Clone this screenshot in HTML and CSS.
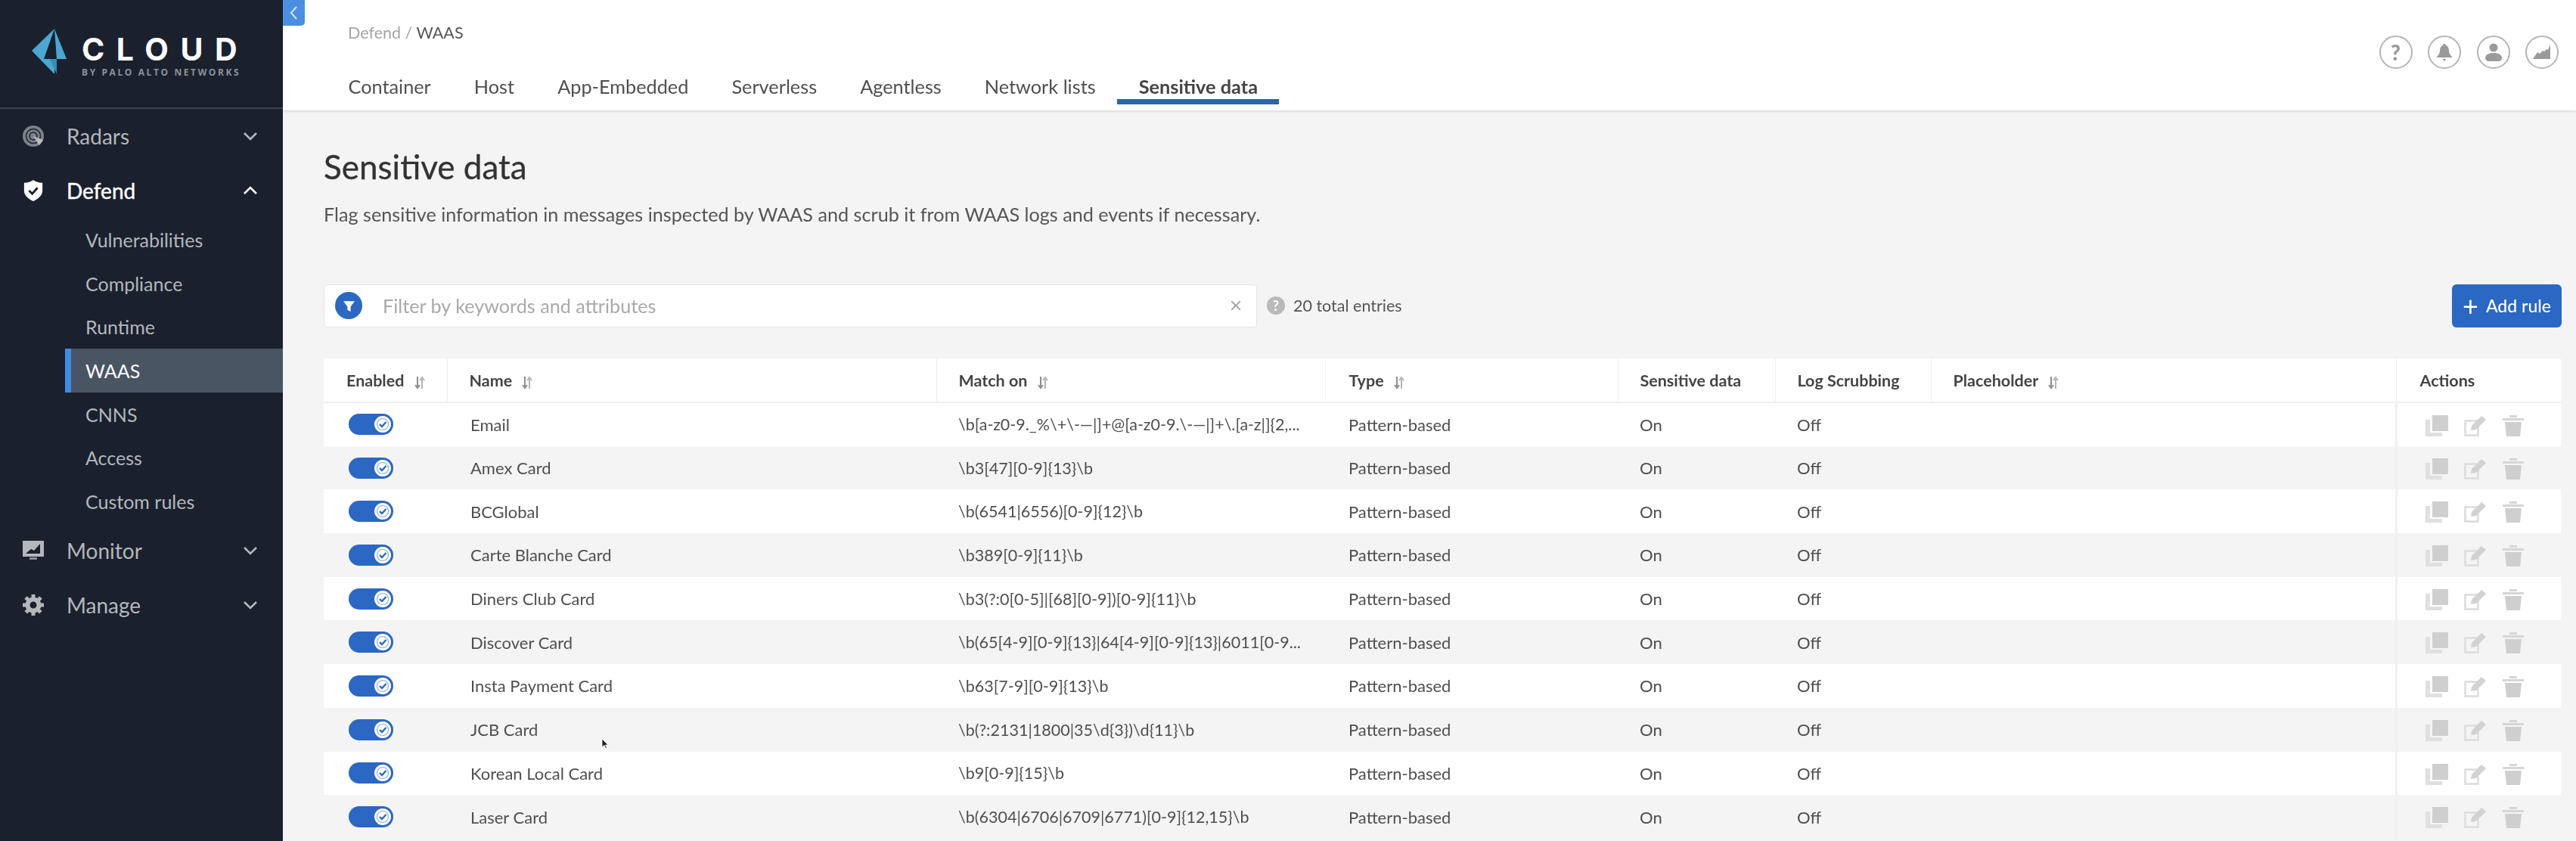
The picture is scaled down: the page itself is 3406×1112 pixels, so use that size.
FILE: index.html
```html
<!DOCTYPE html>
<html lang="en">
<head>
  <meta charset="UTF-8" />
  <title>Sensitive data</title>
  <link rel="stylesheet" href="styles.css">
</head>
<body>

  <svg class="sprites" width="0" height="0">
    <symbol id="i-chev-down" viewBox="0 0 20 12"><path d="M2 2l8 8 8-8" fill="none" stroke="currentColor" stroke-width="2.6"/></symbol>
    <symbol id="i-chev-up" viewBox="0 0 20 12"><path d="M2 10l8-8 8 8" fill="none" stroke="currentColor" stroke-width="2.6"/></symbol>
    <symbol id="i-sort" viewBox="0 0 16 18"><path d="M5 1v14M2 12l3 4 3-4" fill="none" stroke="#8e8e8e" stroke-width="2"/><path d="M11 17V3M8 6l3-4 3 4" fill="none" stroke="#b5b5b5" stroke-width="2"/></symbol>
    <symbol id="i-check" viewBox="0 0 22 22"><circle cx="11" cy="11" r="11" fill="#fff"/><circle cx="11" cy="11" r="7.500" fill="none" stroke="#2a68c4" stroke-width="1.2" opacity=".55"/><path d="M7 11l3 3 5.500-6" fill="none" stroke="#2a68c4" stroke-width="2.400"/></symbol>
    <symbol id="i-copy" viewBox="0 0 30 28"><path d="M9 0h21v21H9z" fill="#cfcfcf"/><path d="M6 6H0v22h22v-5H6z" fill="#e0e0e0"/></symbol>
    <symbol id="i-edit" viewBox="0 0 30 28"><path d="M1.500 7.500h17v19h-17z" fill="none" stroke="#dcdcdc" stroke-width="2.500"/><path d="M9 20l1-6L23 1l6 5-13 13z" fill="#d2d2d2"/></symbol>
    <symbol id="i-trash" viewBox="0 0 28 28"><path d="M0 4h28v3H0zM9 0h10v3H9z" fill="#d6d6d6"/><path d="M3 9h22l-2 19H5z" fill="#cfcfcf"/></symbol>
  </svg>

  <div class="app">

    <!-- Sidebar -->
    <aside class="sidebar">
      <div class="logo">
        <svg class="logo-mark" viewBox="0 0 46 60">
          <path d="M30 0L0 29l30 31V38L16 40z" fill="#4aa8d3"/>
          <path d="M30 0l16 40H33z" fill="#4aa8d3"/>
          <path d="M30 15v25H16z" fill="#1a212d"/>
          <path d="M24 40h9v20z" fill="#3a8db5"/>
        </svg>
        <div class="logo-text">
          <div class="logo-name">CLOUD</div>
          <div class="logo-sub">BY PALO ALTO NETWORKS</div>
        </div>
      </div>

      <div class="nav-item">
        <svg class="nav-icon" viewBox="0 0 28 28">
          <circle cx="14" cy="14" r="14" fill="#7d828a"/>
          <circle cx="14" cy="14" r="9.500" fill="none" stroke="#1a212d" stroke-width="1.500"/>
          <circle cx="14" cy="14" r="5" fill="none" stroke="#1a212d" stroke-width="1.500"/>
          <path d="M14 14l13 5-5 7z" fill="#b9bcc1"/>
        </svg>
        <span class="nav-label">Radars</span>
        <svg class="nav-chev"><use href="#i-chev-down"/></svg>
      </div>

      <div class="nav-item open">
        <svg class="nav-icon" viewBox="0 0 28 30">
          <path d="M14 0c3 2.500 8 4 13 4v11c0 7-6 12-13 15C7 27 1 22 1 15V4c5 0 10-1.500 13-4z" fill="#fff"/>
          <path d="M8 15l4.500 4.500L20 11" fill="none" stroke="#1a212d" stroke-width="3"/>
        </svg>
        <span class="nav-label">Defend</span>
        <svg class="nav-chev"><use href="#i-chev-up"/></svg>
      </div>

      <div class="sub-item">Vulnerabilities</div>
      <div class="sub-item">Compliance</div>
      <div class="sub-item">Runtime</div>
      <div class="sub-item active">WAAS</div>
      <div class="sub-item">CNNS</div>
      <div class="sub-item">Access</div>
      <div class="sub-item">Custom rules</div>

      <div class="nav-item">
        <svg class="nav-icon" viewBox="0 0 28 26">
          <path d="M0 0h28v21H0z" fill="#b4b7bc"/>
          <path d="M4 17l7-6 4 2 8-9v13z" fill="#1a212d"/>
          <path d="M9 22h10v3H9z" fill="#8c9097"/>
        </svg>
        <span class="nav-label">Monitor</span>
        <svg class="nav-chev"><use href="#i-chev-down"/></svg>
      </div>

      <div class="nav-item">
        <svg class="nav-icon" viewBox="0 0 28 28">
          <circle cx="14" cy="14" r="7.500" fill="none" stroke="#b4b7bc" stroke-width="6"/>
          <path d="M14 0v28M0 14h28M4 4l20 20M24 4L4 24" stroke="#b4b7bc" stroke-width="5" stroke-dasharray="5 18"/>
        </svg>
        <span class="nav-label">Manage</span>
        <svg class="nav-chev"><use href="#i-chev-down"/></svg>
      </div>
    </aside>

    <div class="collapse-tab">
      <svg viewBox="0 0 12 20"><path d="M10 2L3 10l7 8" fill="none" stroke="#d8e8fb" stroke-width="2"/></svg>
    </div>

    <div class="main">

      <!-- Top bar -->
      <header class="topbar">
        <div class="topbar-left">
          <div class="crumbs"><span class="crumb-dim">Defend /</span> WAAS</div>
          <nav class="tabs">
            <div class="tab">Container</div>
            <div class="tab">Host</div>
            <div class="tab">App-Embedded</div>
            <div class="tab">Serverless</div>
            <div class="tab">Agentless</div>
            <div class="tab">Network lists</div>
            <div class="tab active">Sensitive data</div>
          </nav>
        </div>
        <div class="top-icons">
          <div class="top-icon"><span class="q-mark">?</span></div>
          <div class="top-icon">
            <svg viewBox="0 0 24 24"><path d="M12 1c1.500 0 2 1 2 2 3 1 4 4 4 7 0 4 2 6 4 8v1H2v-1c2-2 4-4 4-8 0-3 1-6 4-7 0-1 .5-2 2-2zM9.500 21h5L12 24z" fill="#9a9a9a"/></svg>
          </div>
          <div class="top-icon">
            <svg viewBox="0 0 24 24"><circle cx="12" cy="6" r="5.500" fill="#9a9a9a"/><path d="M1 20c0-5 5-7 11-7s11 2 11 7c0 2-2 4-5 4H6c-3 0-5-2-5-4z" fill="#9a9a9a"/></svg>
          </div>
          <div class="top-icon">
            <svg viewBox="0 0 24 24"><path d="M0 21L6 12l3 2 4-4 2 1 3-3 2 1 3-7v19z" fill="#9a9a9a"/></svg>
          </div>
        </div>
      </header>

      <!-- Page content -->
      <section class="content">
        <h1>Sensitive data</h1>
        <p class="lead">Flag sensitive information in messages inspected by WAAS and scrub it from WAAS logs and events if necessary.</p>

        <div class="toolbar">
          <div class="filter">
            <span class="filter-badge">
              <svg viewBox="0 0 16 16"><path d="M1 2h14L10 9v6L6 13V9z" fill="#fff"/></svg>
            </span>
            <span class="filter-hint">Filter by keywords and attributes</span>
            <svg class="filter-clear" viewBox="0 0 14 14"><path d="M2 2l10 10M12 2L2 12" stroke="#9c9c9c" stroke-width="1.600"/></svg>
          </div>
          <span class="help-dot">?</span>
          <span class="total">20 total entries</span>
          <button class="add-btn"><span class="plus">+</span>Add rule</button>
        </div>

        <table class="rules">
          <colgroup>
            <col class="c-enabled"><col class="c-name"><col class="c-match"><col class="c-type">
            <col class="c-sens"><col class="c-log"><col class="c-place"><col class="c-actions">
          </colgroup>
          <thead>
            <tr>
              <th>Enabled <svg class="sort"><use href="#i-sort"/></svg></th>
              <th>Name <svg class="sort"><use href="#i-sort"/></svg></th>
              <th>Match on <svg class="sort"><use href="#i-sort"/></svg></th>
              <th class="th-type">Type <svg class="sort"><use href="#i-sort"/></svg></th>
              <th>Sensitive data</th>
              <th>Log Scrubbing</th>
              <th>Placeholder <svg class="sort"><use href="#i-sort"/></svg></th>
              <th>Actions</th>
            </tr>
          </thead>
          <tbody>
            <tr>
              <td><span class="switch"><svg><use href="#i-check"/></svg></span></td>
              <td class="td-name">Email</td>
              <td class="td-match">\b[a-z0-9._%\+\-—|]+@[a-z0-9.\-—|]+\.[a-z|]{2,...</td>
              <td class="td-type">Pattern-based</td><td>On</td><td>Off</td><td></td>
              <td class="acts"><svg class="a-copy"><use href="#i-copy"/></svg><svg class="a-edit"><use href="#i-edit"/></svg><svg class="a-trash"><use href="#i-trash"/></svg></td>
            </tr>
            <tr>
              <td><span class="switch"><svg><use href="#i-check"/></svg></span></td>
              <td class="td-name">Amex Card</td>
              <td class="td-match">\b3[47][0-9]{13}\b</td>
              <td class="td-type">Pattern-based</td><td>On</td><td>Off</td><td></td>
              <td class="acts"><svg class="a-copy"><use href="#i-copy"/></svg><svg class="a-edit"><use href="#i-edit"/></svg><svg class="a-trash"><use href="#i-trash"/></svg></td>
            </tr>
            <tr>
              <td><span class="switch"><svg><use href="#i-check"/></svg></span></td>
              <td class="td-name">BCGlobal</td>
              <td class="td-match">\b(6541|6556)[0-9]{12}\b</td>
              <td class="td-type">Pattern-based</td><td>On</td><td>Off</td><td></td>
              <td class="acts"><svg class="a-copy"><use href="#i-copy"/></svg><svg class="a-edit"><use href="#i-edit"/></svg><svg class="a-trash"><use href="#i-trash"/></svg></td>
            </tr>
            <tr>
              <td><span class="switch"><svg><use href="#i-check"/></svg></span></td>
              <td class="td-name">Carte Blanche Card</td>
              <td class="td-match">\b389[0-9]{11}\b</td>
              <td class="td-type">Pattern-based</td><td>On</td><td>Off</td><td></td>
              <td class="acts"><svg class="a-copy"><use href="#i-copy"/></svg><svg class="a-edit"><use href="#i-edit"/></svg><svg class="a-trash"><use href="#i-trash"/></svg></td>
            </tr>
            <tr>
              <td><span class="switch"><svg><use href="#i-check"/></svg></span></td>
              <td class="td-name">Diners Club Card</td>
              <td class="td-match">\b3(?:0[0-5]|[68][0-9])[0-9]{11}\b</td>
              <td class="td-type">Pattern-based</td><td>On</td><td>Off</td><td></td>
              <td class="acts"><svg class="a-copy"><use href="#i-copy"/></svg><svg class="a-edit"><use href="#i-edit"/></svg><svg class="a-trash"><use href="#i-trash"/></svg></td>
            </tr>
            <tr>
              <td><span class="switch"><svg><use href="#i-check"/></svg></span></td>
              <td class="td-name">Discover Card</td>
              <td class="td-match">\b(65[4-9][0-9]{13}|64[4-9][0-9]{13}|6011[0-9...</td>
              <td class="td-type">Pattern-based</td><td>On</td><td>Off</td><td></td>
              <td class="acts"><svg class="a-copy"><use href="#i-copy"/></svg><svg class="a-edit"><use href="#i-edit"/></svg><svg class="a-trash"><use href="#i-trash"/></svg></td>
            </tr>
            <tr>
              <td><span class="switch"><svg><use href="#i-check"/></svg></span></td>
              <td class="td-name">Insta Payment Card</td>
              <td class="td-match">\b63[7-9][0-9]{13}\b</td>
              <td class="td-type">Pattern-based</td><td>On</td><td>Off</td><td></td>
              <td class="acts"><svg class="a-copy"><use href="#i-copy"/></svg><svg class="a-edit"><use href="#i-edit"/></svg><svg class="a-trash"><use href="#i-trash"/></svg></td>
            </tr>
            <tr>
              <td><span class="switch"><svg><use href="#i-check"/></svg></span></td>
              <td class="td-name">JCB Card</td>
              <td class="td-match">\b(?:2131|1800|35\d{3})\d{11}\b</td>
              <td class="td-type">Pattern-based</td><td>On</td><td>Off</td><td></td>
              <td class="acts"><svg class="a-copy"><use href="#i-copy"/></svg><svg class="a-edit"><use href="#i-edit"/></svg><svg class="a-trash"><use href="#i-trash"/></svg></td>
            </tr>
            <tr>
              <td><span class="switch"><svg><use href="#i-check"/></svg></span></td>
              <td class="td-name">Korean Local Card</td>
              <td class="td-match">\b9[0-9]{15}\b</td>
              <td class="td-type">Pattern-based</td><td>On</td><td>Off</td><td></td>
              <td class="acts"><svg class="a-copy"><use href="#i-copy"/></svg><svg class="a-edit"><use href="#i-edit"/></svg><svg class="a-trash"><use href="#i-trash"/></svg></td>
            </tr>
            <tr>
              <td><span class="switch"><svg><use href="#i-check"/></svg></span></td>
              <td class="td-name">Laser Card</td>
              <td class="td-match">\b(6304|6706|6709|6771)[0-9]{12,15}\b</td>
              <td class="td-type">Pattern-based</td><td>On</td><td>Off</td><td></td>
              <td class="acts"><svg class="a-copy"><use href="#i-copy"/></svg><svg class="a-edit"><use href="#i-edit"/></svg><svg class="a-trash"><use href="#i-trash"/></svg></td>
            </tr>
          </tbody>
        </table>
      </section>
    </div>

    <!-- mouse pointer caught in the capture -->
    <svg class="pointer" viewBox="0 0 10 15"><path d="M1 1v11l3-2.500 2 4 1.500-.8-2-3.700H9z" fill="#222" stroke="#fff" stroke-width=".8"/></svg>
  </div>

</body>
</html>
```

FILE: styles.css
```css
* {
  box-sizing: border-box;
}

html, body {
  margin: 0;
  height: 100%;
  overflow: hidden;
}

body {
  font-family: Lato, "Open Sans", sans-serif;
  background: #f4f4f4;
  color: #4a4a4a;
}

.sprites {
  position: absolute;
}

/* the capture is a soft video frame */
.app {
  position: relative;
  display: flex;
  height: 1112px;
  overflow: hidden;
  filter: blur(0.6px);
}

/* Sidebar */
.sidebar {
  width: 374px;
  flex: none;
  background: #1a212d;
  color: #b4b7bc;
}

.logo {
  display: flex;
  align-items: flex-start;
  height: 144px;
  padding: 38px 0 0 42px;
  border-bottom: 2px solid #3c434e;
}

.logo-mark {
  width: 46px;
  height: 60px;
  flex: none;
}

.logo-text {
  margin-left: 20px;
  padding-top: 10px;
}

.logo-name {
  font-family: Inter, sans-serif;
  font-weight: 700;
  font-size: 41px;
  line-height: 34px;
  letter-spacing: 15.500px;
  color: #fff;
}

.logo-sub {
  font-family: "Open Sans", sans-serif;
  font-weight: 700;
  font-size: 12px;
  line-height: 14px;
  margin-top: 7px;
  letter-spacing: 2.600px;
  color: #8e9299;
  white-space: nowrap;
}

.nav-item {
  display: flex;
  align-items: center;
  height: 72px;
  padding-left: 30px;
  font-size: 28px;
}

.nav-item.open {
  color: #fff;
  -webkit-text-stroke: 0.4px #fff;
}

.nav-icon {
  width: 28px;
  height: 28px;
  flex: none;
}

.nav-label {
  margin-left: 30px;
  flex: 1;
}

.nav-chev {
  width: 20px;
  height: 12px;
  margin-right: 33px;
}

.sub-item {
  display: flex;
  align-items: center;
  height: 57.700px;
  margin-left: 86px;
  padding-left: 27px;
  font-size: 25px;
}

.sub-item.active {
  background: #4a5563;
  border-left: 8px solid #3f8ce8;
  padding-left: 19px;
  color: #fff;
}

.collapse-tab {
  position: absolute;
  left: 374px;
  top: 0;
  width: 29px;
  height: 34px;
  background: #4a90e2;
  border-radius: 0 0 5px 0;
  padding: 7px 8px;
  z-index: 2;
}

.collapse-tab svg {
  display: block;
  width: 12px;
  height: 20px;
}

/* Main column */
.main {
  flex: 1;
  min-width: 0;
}

.topbar {
  display: flex;
  justify-content: space-between;
  height: 146px;
  padding-left: 86px;
  background: #fff;
  box-shadow: 0 1px 4px rgba(0,0,0,0.14);
}

.crumbs {
  padding-top: 29px;
  height: 92px;
  font-size: 21.500px;
  line-height: 28px;
  color: #555;
}

.crumb-dim {
  color: #a5a5a5;
}

.tabs {
  display: flex;
  margin-left: -28px;
}

.tab {
  height: 46px;
  padding: 0 28.500px;
  font-size: 25.300px;
  line-height: 44px;
  color: #4f4f4f;
  white-space: nowrap;
}

.tab.active {
  color: #444;
  font-weight: 700;
  border-bottom: 7px solid #2a62b4;
}

.top-icons {
  display: flex;
  gap: 20.500px;
  padding: 47px 23px 0 0;
}

.top-icon {
  display: flex;
  align-items: center;
  justify-content: center;
  width: 44px;
  height: 44px;
  border: 2px solid #b5b5b5;
  border-radius: 50%;
}

.top-icon svg {
  width: 24px;
  height: 24px;
}

.q-mark {
  font-weight: 900;
  font-size: 28px;
  color: #9a9a9a;
}

/* Page content */
.content {
  padding: 0 19px 0 54px;
}

h1 {
  margin: 0;
  padding-top: 50px;
  font-size: 44px;
  line-height: 48px;
  font-weight: 400;
  color: #333;
  -webkit-text-stroke: 0.3px #333;
}

.lead {
  margin: 0;
  padding-top: 23px;
  font-size: 25.200px;
  line-height: 32px;
  color: #555;
}

.toolbar {
  display: flex;
  align-items: center;
  margin-top: 76px;
  height: 58px;
}

.filter {
  display: flex;
  align-items: center;
  width: 1234px;
  height: 57px;
  padding: 0 19px 0 14px;
  background: #fff;
  border: 1px solid #e4e4e4;
  border-radius: 4px;
}

.filter-badge {
  display: flex;
  align-items: center;
  justify-content: center;
  width: 36px;
  height: 36px;
  border-radius: 50%;
  background: #2a68c4;
}

.filter-badge svg {
  width: 17px;
  height: 17px;
}

.filter-hint {
  flex: 1;
  margin-left: 27px;
  font-size: 25.200px;
  color: #a9a9a9;
}

.filter-clear {
  width: 16px;
  height: 16px;
}

.help-dot {
  display: flex;
  align-items: center;
  justify-content: center;
  width: 24px;
  height: 24px;
  margin-left: 13px;
  border-radius: 50%;
  background: #b9b9b9;
  color: #fff;
  font-size: 18px;
  font-weight: 700;
}

.total {
  margin-left: 11px;
  font-size: 21.500px;
  color: #555;
}

.add-btn {
  display: flex;
  align-items: center;
  justify-content: center;
  margin-left: auto;
  width: 145px;
  height: 57px;
  padding: 0;
  background: #2a68c4;
  border: none;
  border-radius: 6px;
  color: #fff;
  font-family: inherit;
  font-size: 23px;
  font-weight: 500;
}

.plus {
  margin-right: 10px;
  font-size: 36px;
  line-height: 30px;
  font-weight: 400;
}

/* Rules table */
.rules {
  width: 2958px;
  margin-top: 41px;
  table-layout: fixed;
  border-collapse: collapse;
  background: #fff;
  font-size: 21.500px;
}

.c-enabled { width: 163px; }
.c-name { width: 647px; }
.c-match { width: 514px; }
.c-type { width: 387px; }
.c-sens { width: 208px; }
.c-log { width: 206px; }
.c-place { width: 615px; }
.c-actions { width: 218px; }

.rules th {
  height: 58px;
  padding: 0 0 0 29px;
  text-align: left;
  font-weight: 700;
  color: #444;
  border-bottom: 2px solid #efefef;
  border-left: 1px solid #efefef;
  white-space: nowrap;
}

.rules th:first-child {
  border-left: none;
}

.rules th:first-child {
  padding-left: 30px;
}

.rules th:last-child {
  padding-left: 31px;
}

.rules th.th-type {
  padding-left: 31px;
}

.sort {
  width: 16px;
  height: 18px;
  margin-left: 7px;
  vertical-align: -4px;
}

.rules td {
  height: 57.700px;
  padding: 0 0 0 29px;
  font-size: 22px;
  color: #4f4f4f;
  white-space: nowrap;
  overflow: hidden;
}

.rules td:first-child {
  padding-left: 33px;
}

.rules td.td-name {
  padding-left: 31px;
}

.rules td.td-match {
  font-size: 21.500px;
}

.rules td.td-type {
  padding-left: 31px;
}

.rules tbody tr:nth-child(even) {
  background: #f4f4f4;
}

.switch {
  display: block;
  position: relative;
  width: 59px;
  height: 28px;
  border-radius: 14px;
  background: #2a68c4;
}

.switch svg {
  position: absolute;
  right: 3px;
  top: 3px;
  width: 22px;
  height: 22px;
}

.rules td.acts {
  padding-left: 37px;
  border-left: 3px solid #f0f0f0;
}

.acts svg {
  width: 30px;
  height: 28px;
  margin-right: 21px;
  vertical-align: middle;
}

.acts svg.a-trash {
  width: 28px;
  margin-right: 0;
}

.pointer {
  position: absolute;
  left: 795px;
  top: 976px;
  width: 10px;
  height: 15px;
}
```
